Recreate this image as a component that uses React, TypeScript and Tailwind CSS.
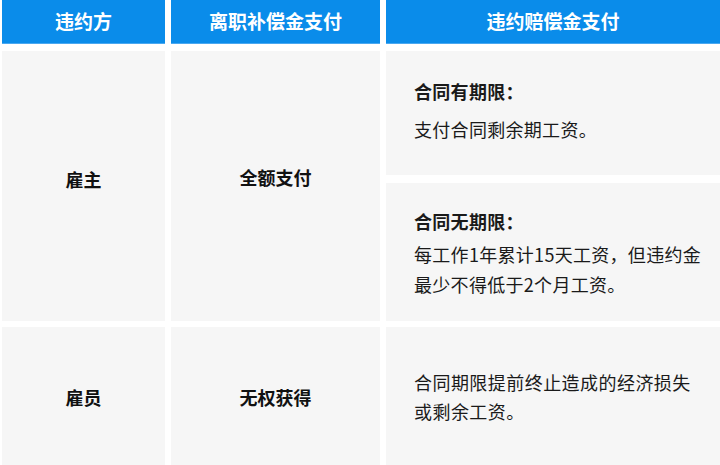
const font = { fontFamily: '"Noto Sans CJK SC", "Noto Sans", sans-serif' };

const headers = ["违约方", "离职补偿金支付", "违约赔偿金支付"];

export default function App() {
  return (
    <div className="w-[720px] h-[465px] overflow-hidden bg-white pl-[2px]" style={font}>
      <div className="grid grid-cols-[163px_209px_334px] gap-x-[6px]">
        {headers.map((h) => (
          <div
            key={h}
            className="h-[44px] flex items-center justify-center bg-[#0a8cea] border-b border-[#4aa8f0] text-white text-[19px] font-bold"
          >
            {h}
          </div>
        ))}
      </div>

      {/* 雇主 */}
      <div className="grid grid-cols-[163px_209px_334px] gap-x-[6px] mt-[7px] h-[270px]">
        <div className="bg-[#f6f6f6] flex items-center justify-center pb-[14px] text-[18px] font-bold text-[#111]">
          雇主
        </div>
        <div className="bg-[#f6f6f6] flex items-center justify-center pb-[17px] text-[18px] font-bold text-[#111]">
          全额支付
        </div>
        <div className="flex flex-col gap-[8px]">
          <div className="h-[124px] bg-[#f6f6f6] flex flex-col justify-center pl-[28px] pb-[6px] text-[18px] tracking-[0.3px] text-[#1a1a1a]">
            <div className="font-bold leading-[30px] mb-[8px]">合同有期限：</div>
            <div className="leading-[30px]">支付合同剩余期工资。</div>
          </div>
          <div className="flex-1 bg-[#f6f6f6] flex flex-col justify-center pl-[28px] pr-[10px] text-[18px] tracking-[0.3px] text-[#1a1a1a]">
            <div className="font-bold leading-[30px] mb-[3px]">合同无期限：</div>
            <div className="leading-[30px]">
              每工作1年累计15天工资，但违约金
              <br />
              最少不得低于2个月工资。
            </div>
          </div>
        </div>
      </div>

      {/* 雇员 */}
      <div className="grid grid-cols-[163px_209px_334px] gap-x-[6px] mt-[6px] h-[140px]">
        <div className="bg-[#f6f6f6] flex items-center justify-center text-[18px] font-bold text-[#111]">
          雇员
        </div>
        <div className="bg-[#f6f6f6] flex items-center justify-center text-[18px] font-bold text-[#111]">
          无权获得
        </div>
        <div className="bg-[#f6f6f6] flex flex-col justify-center pl-[28px] text-[18px] tracking-[0.45px] text-[#1a1a1a] leading-[29px]">
          <div>合同期限提前终止造成的经济损失</div>
          <div>或剩余工资。</div>
        </div>
      </div>
    </div>
  );
}
